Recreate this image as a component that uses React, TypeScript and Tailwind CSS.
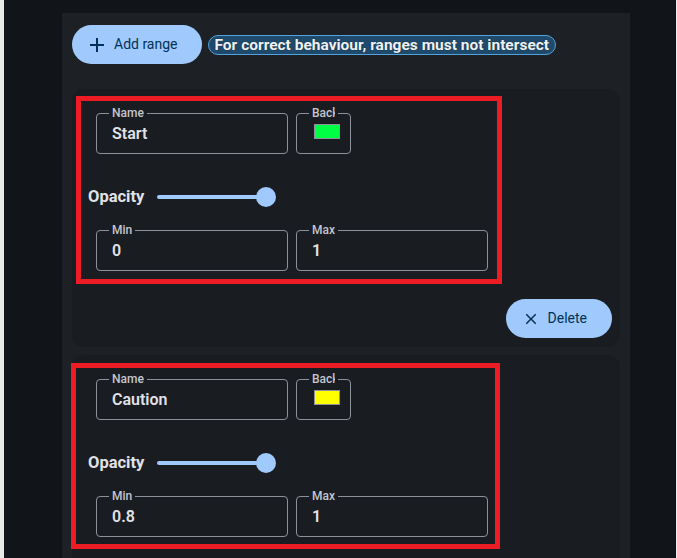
import React from 'react';

const AddIcon = () => (
  <svg width="24" height="24" viewBox="0 0 24 24" fill="currentColor">
    <path d="M19 13h-6v6h-2v-6H5v-2h6V5h2v6h6v2z" />
  </svg>
);

const CloseIcon = () => (
  <svg width="18" height="18" viewBox="0 0 24 24" fill="currentColor">
    <path d="M19 6.41L17.59 5 12 10.59 6.41 5 5 6.41 10.59 12 5 17.59 6.41 19 12 13.41 17.59 19 19 17.59 13.41 12z" />
  </svg>
);

const Field: React.FC<{ label: string; value: string }> = ({ label, value }) => (
  <div className="relative flex h-[41px] w-[192px] items-center rounded border border-[#8d9199] px-[15px]">
    <span className="absolute -top-[8px] left-[12px] bg-[#191c20] px-[3px] text-[12px] leading-[14px] font-medium text-[#c3c6cf]">
      {label}
    </span>
    <span className="text-[16px] leading-5 font-semibold text-[#e1e2e8]">{value}</span>
  </div>
);

const ColorField: React.FC<{ color: string }> = ({ color }) => (
  <div className="relative h-[41px] w-[55px] rounded border border-[#8d9199] pl-[17px] pt-[10px]">
    <span className="absolute -top-[8px] left-[12px] bg-[#191c20] px-[3px] text-[12px] leading-[14px] font-medium text-[#c3c6cf]">
      <span className="block w-[23px] overflow-hidden whitespace-nowrap">Background</span>
    </span>
    <div className="h-[15px] w-[26px] border border-[#8d9199]" style={{ backgroundColor: color }} />
  </div>
);

interface RangeProps {
  name: string;
  color: string;
  min: string;
  max: string;
  mark: string;
}

const RangeCard: React.FC<RangeProps> = ({ name, color, min, max, mark }) => (
  <div className="relative rounded-xl bg-[#191c20] pt-6 pl-6 pr-2 pb-[9px]">
    <div className="flex gap-2">
      <Field label="Name" value={name} />
      <ColorField color={color} />
    </div>

    <div className="-ml-2 mt-[33px] flex h-5 items-center">
      <span className="text-[16.5px] font-bold text-[#e1e2e8]">Opacity</span>
      <div className="ml-[13px] flex items-center">
        <div className="h-1 w-[109px] rounded-full bg-[#a0cafd]" />
        <div className="-ml-[10px] h-5 w-5 rounded-full bg-[#a0cafd]" />
      </div>
    </div>

    <div className="mt-[23px] flex gap-2">
      <Field label="Min" value={min} />
      <Field label="Max" value={max} />
    </div>

    <div className="mt-[28px] flex justify-end">
      <button className="flex h-[39px] items-center gap-2 rounded-full bg-[#a0cafd] pl-4 pr-[25px] text-[14px] text-[#003258]">
        <CloseIcon />
        Delete
      </button>
    </div>

    {/* annotation outline */}
    <div className={`pointer-events-none absolute border-[5px] border-[#ed1c24] ${mark}`} />
  </div>
);

export default function App() {
  return (
    <div className="flex h-[558px] overflow-hidden bg-[#111418] font-['Roboto',sans-serif]">
      <div className="w-1 shrink-0 bg-[#e9e9e9]" />
      <div className="flex-1">
        <div className="ml-[58px] mt-[13px] w-[568px] bg-[#1d2024] px-[10px] pt-3 pb-4">
          <div className="flex items-center gap-[6px]">
            <button className="flex h-[39px] items-center gap-[5px] rounded-full bg-[#a0cafd] pl-[13px] pr-6 text-[14px] text-[#003258]">
              <AddIcon />
              Add range
            </button>
            <span className="whitespace-nowrap rounded-[10px] border border-[#52a2dc] bg-[#1f4a6b] px-[6px] text-[15.5px] leading-[18px] font-bold text-[#eef2f6] [text-shadow:0_0_1px_#0b1a26]">
              For correct behaviour, ranges must not intersect
            </span>
          </div>

          <div className="mt-[25px] flex flex-col gap-2">
            <RangeCard
              name="Start"
              color="#00ff44"
              min="0"
              max="1"
              mark="left-[4px] top-[7px] h-[188px] w-[426px]"
            />
            <RangeCard
              name="Caution"
              color="#ffff00"
              min="0.8"
              max="1"
              mark="-left-[1px] top-[8px] h-[186px] w-[429px]"
            />
          </div>
        </div>
      </div>
      <div className="w-px shrink-0 bg-[#e9e9e9]" />
    </div>
  );
}
